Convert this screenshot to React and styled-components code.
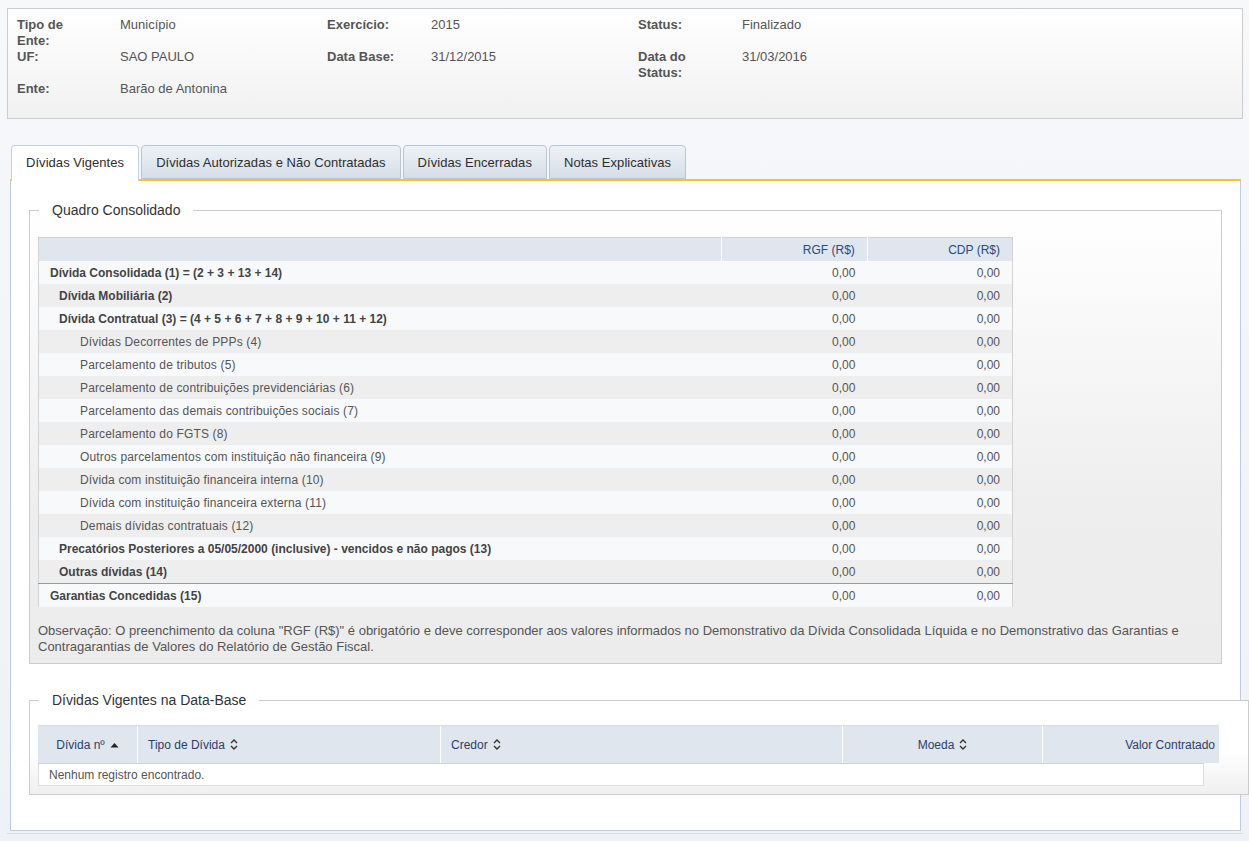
import React from "react";
import styled, { createGlobalStyle } from "styled-components";

const GlobalStyle = createGlobalStyle`
  html, body {
    margin: 0;
    padding: 0;
  }
  body {
    background: linear-gradient(to bottom, #f6f8fa 0%, #eef2f6 100%);
    min-height: 841px;
    font-family: "Liberation Sans", Arial, sans-serif;
    font-size: 12px;
    color: #555;
  }
`;

const info = [
  ["Tipo de Ente:", "Município", "Exercício:", "2015", "Status:", "Finalizado"],
  ["UF:", "SAO PAULO", "Data Base:", "31/12/2015", "Data do Status:", "31/03/2016"],
  ["Ente:", "Barão de Antonina", "", "", "", ""],
];

const tabs = [
  "Dívidas Vigentes",
  "Dívidas Autorizadas e Não Contratadas",
  "Dívidas Encerradas",
  "Notas Explicativas",
];

const rows = [
  { label: "Dívida Consolidada (1) = (2 + 3 + 13 + 14)", level: 0, bold: true },
  { label: "Dívida Mobiliária (2)", level: 1, bold: true },
  { label: "Dívida Contratual (3) = (4 + 5 + 6 + 7 + 8 + 9 + 10 + 11 + 12)", level: 1, bold: true },
  { label: "Dívidas Decorrentes de PPPs (4)", level: 2 },
  { label: "Parcelamento de tributos (5)", level: 2 },
  { label: "Parcelamento de contribuições previdenciárias (6)", level: 2 },
  { label: "Parcelamento das demais contribuições sociais (7)", level: 2 },
  { label: "Parcelamento do FGTS (8)", level: 2 },
  { label: "Outros parcelamentos com instituição não financeira (9)", level: 2 },
  { label: "Dívida com instituição financeira interna (10)", level: 2 },
  { label: "Dívida com instituição financeira externa (11)", level: 2 },
  { label: "Demais dívidas contratuais (12)", level: 2 },
  { label: "Precatórios Posteriores a 05/05/2000 (inclusive) - vencidos e não pagos (13)", level: 1, bold: true },
  { label: "Outras dívidas (14)", level: 1, bold: true },
  { label: "Garantias Concedidas (15)", level: 0, bold: true, sep: true },
];

const columns = [
  { title: "Dívida nº", sort: "asc", align: "center" },
  { title: "Tipo de Dívida", sort: "both", align: "left" },
  { title: "Credor", sort: "both", align: "left" },
  { title: "Moeda", sort: "both", align: "center" },
  { title: "Valor Contratado", align: "right" },
];

function SortIcon({ type }) {
  if (type === "asc") {
    return (
      <SortSvg width="9" height="6" viewBox="0 0 9 6">
        <path d="M0.5 5.5 L4.5 1 L8.5 5.5 Z" fill="#222" />
      </SortSvg>
    );
  }
  return (
    <SortSvg width="8" height="11" viewBox="0 0 8 11">
      <path d="M1 4 L4 1 L7 4" fill="none" stroke="#333" strokeWidth="1.4" />
      <path d="M1 7 L4 10 L7 7" fill="none" stroke="#333" strokeWidth="1.4" />
    </SortSvg>
  );
}

export default function App() {
  return (
    <Page>
      <GlobalStyle />
      <InfoBox>
        {info.map((row, i) =>
          row.map((text, j) =>
            j % 2 === 0 ? (
              <InfoLabel key={`${i}-${j}`}>
                <span>{text}</span>
              </InfoLabel>
            ) : (
              <InfoValue key={`${i}-${j}`}>{text}</InfoValue>
            )
          )
        )}
      </InfoBox>

      <TabBar>
        {tabs.map((t, i) => (
          <Tab key={t} $active={i === 0}>
            {t}
          </Tab>
        ))}
      </TabBar>

      <Panel>
        <Fieldset>
          <Legend>Quadro Consolidado</Legend>
          <ConsTable>
            <colgroup>
              <col style={{ width: 682 }} />
              <col style={{ width: 146 }} />
              <col style={{ width: 145 }} />
            </colgroup>
            <thead>
              <tr>
                <HeadCell />
                <HeadCell>RGF (R$)</HeadCell>
                <HeadCell>CDP (R$)</HeadCell>
              </tr>
            </thead>
            <tbody>
              {rows.map((r, i) => (
                <BodyRow key={r.label} $alt={i % 2 === 1} $sep={r.sep}>
                  <LabelCell $level={r.level} $bold={r.bold}>
                    {r.label}
                  </LabelCell>
                  <NumCell>0,00</NumCell>
                  <NumCell>0,00</NumCell>
                </BodyRow>
              ))}
            </tbody>
          </ConsTable>
          <Note>
            Observação: O preenchimento da coluna "RGF (R$)" é obrigatório e deve corresponder aos
            valores informados no Demonstrativo da Dívida Consolidada Líquida e no Demonstrativo das
            Garantias e Contragarantias de Valores do Relatório de Gestão Fiscal.
          </Note>
        </Fieldset>

        <WideFieldset>
          <Legend>Dívidas Vigentes na Data-Base</Legend>
          <GridHead>
            {columns.map((c) => (
              <GridHeadCell key={c.title} $align={c.align}>
                {c.title}
                {c.sort && <SortIcon type={c.sort} />}
              </GridHeadCell>
            ))}
          </GridHead>
          <EmptyRow>Nenhum registro encontrado.</EmptyRow>
        </WideFieldset>
      </Panel>
      <Footer />
    </Page>
  );
}

const Page = styled.div`
  padding: 8px 6px 0 7px;
`;

const InfoBox = styled.div`
  display: grid;
  grid-template-columns: 103px 207px 104px 207px 104px 1fr;
  grid-auto-rows: 32px;
  padding: 8px 9px 5px;
  border: 1px solid #cccccc;
  background: linear-gradient(to bottom, #ffffff 0%, #f1f1f1 100%);
  font-size: 13px;
  line-height: 16px;
`;

const InfoLabel = styled.div`
  font-weight: bold;
  color: #555;
  span {
    display: block;
    max-width: 76px;
  }
`;

const InfoValue = styled.div`
  color: #555;
`;

const TabBar = styled.div`
  display: flex;
  gap: 2px;
  margin: 26px 0 0 4px;
  position: relative;
  z-index: 1;
`;

const Tab = styled.div`
  height: ${(p) => (p.$active ? "36px" : "34px")};
  margin-bottom: ${(p) => (p.$active ? "-2px" : "0")};
  padding: 0 14px;
  display: flex;
  align-items: ${(p) => (p.$active ? "flex-start" : "center")};
  padding-top: ${(p) => (p.$active ? "9px" : "0")};
  box-sizing: border-box;
  font-size: 13px;
  letter-spacing: 0.05px;
  color: #2e2e2e;
  border: 1px solid ${(p) => (p.$active ? "#c5d0dc" : "#b9c5d2")};
  border-bottom: ${(p) => (p.$active ? "none" : "1px solid #b9c5d2")};
  border-radius: 4px 4px 0 0;
  background: ${(p) =>
    p.$active ? "#ffffff" : "linear-gradient(to bottom, #eef2f6 0%, #d5dee8 100%)"};
  cursor: pointer;
`;

const Panel = styled.div`
  margin-left: 3px;
  width: 1231px;
  box-sizing: border-box;
  border: 1px solid #c0ccd9;
  border-top: 2px solid #efc733;
  background: #ffffff;
  padding: 21px 18px 35px;
`;

const Fieldset = styled.fieldset`
  margin: 0;
  padding: 19px 8px 8px 8px;
  border: 1px solid #cccccc;
  background: linear-gradient(to bottom, #ffffff 0%, #eeeeee 65%, #ececec 100%);
  min-width: 0;
`;

const WideFieldset = styled(Fieldset)`
  margin-top: 28px;
  width: 1220px;
  box-sizing: border-box;
  padding-top: 17px;
  background: linear-gradient(to bottom, #ffffff 0%, #ffffff 55%, #efefef 100%);
`;

const Legend = styled.legend`
  padding: 0 13px;
  margin-left: 1px;
  font-size: 14px;
  line-height: 16px;
  color: #333;
`;

const ConsTable = styled.table`
  border-collapse: collapse;
  table-layout: fixed;
  width: 975px;
  border: 1px solid #d2d2d2;
  border-bottom: none;
  font-size: 12px;
`;

const HeadCell = styled.th`
  height: 23px;
  padding: 0 12px;
  background: #dfe6ee;
  color: #2d4a7a;
  font-weight: normal;
  text-align: right;
  border-right: 1px solid #ffffff;
  &:last-child {
    border-right: none;
  }
`;

const BodyRow = styled.tr`
  background: ${(p) => (p.$alt ? "#eeeeee" : "#f8f9fb")};
  border-top: ${(p) => (p.$sep ? "1px solid #999999" : "none")};
`;

const LabelCell = styled.td`
  height: 23px;
  padding: 0 0 0 ${(p) => [11, 20, 41][p.$level]}px;
  font-weight: ${(p) => (p.$bold ? "bold" : "normal")};
  letter-spacing: ${(p) => (p.$bold ? "0" : "0.15px")};
  color: ${(p) => (p.$bold ? "#444" : "#555")};
  white-space: nowrap;
`;

const NumCell = styled.td`
  height: 23px;
  padding: 0 12px;
  text-align: right;
  color: #555;
`;

const Note = styled.p`
  margin: 16px 0 0;
  line-height: 16px;
  font-size: 13px;
  color: #555;
`;

const GridHead = styled.div`
  display: grid;
  grid-template-columns: 100px 303px 402px 200px 176px;
  width: 1181px;
  background: #dfe6ee;
  border-top: 1px solid #d6dde6;
`;

const GridHeadCell = styled.div`
  height: 37px;
  display: flex;
  align-items: center;
  justify-content: ${(p) =>
    p.$align === "center" ? "center" : p.$align === "right" ? "flex-end" : "flex-start"};
  gap: 5px;
  padding: 0 ${(p) => (p.$align === "right" ? "4px" : "10px")};
  border-right: 1px solid #ffffff;
  color: #2b3f6b;
  font-size: 12px;
  &:last-child {
    border-right: none;
  }
`;

const SortSvg = styled.svg`
  display: block;
  flex: none;
`;

const EmptyRow = styled.div`
  width: 1166px;
  box-sizing: border-box;
  height: 23px;
  line-height: 22px;
  padding-left: 10px;
  background: #ffffff;
  border: 1px solid #dddddd;
  border-top: 1px solid #d3d3d3;
  color: #555;
`;

const Footer = styled.div`
  margin: 2px 0 0 0;
  border-top: 1px solid #d5dce4;
  height: 8px;
`;
